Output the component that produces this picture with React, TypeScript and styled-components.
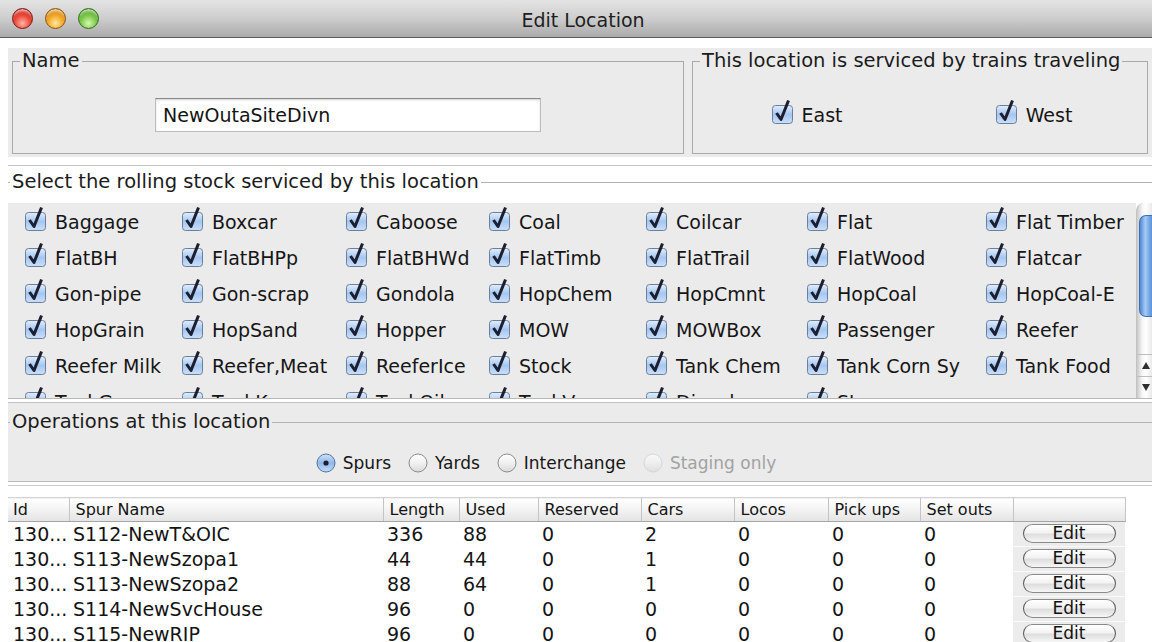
import React from "react";
import styled, { createGlobalStyle } from "styled-components";

const GlobalStyle = createGlobalStyle`
  html, body {
    margin: 0;
    padding: 0;
    background: #ffffff;
  }
  body {
    font-family: "DejaVu Sans", "Liberation Sans", sans-serif;
    color: #161616;
  }
`;

const Window = styled.div`
  width: 1152px;
  height: 642px;
  overflow: hidden;
  background: #ffffff;
`;

const TitleBar = styled.div`
  height: 37px;
  border-bottom: 1px solid #5c5c5c;
  background: linear-gradient(#e4e4e4, #cdcdcd 50%, #aaaaaa);
  display: grid;
  grid-template-columns: 1fr auto 1fr;
  align-items: center;
`;

const Lights = styled.div`
  display: flex;
  gap: 12px;
  padding-left: 12px;
`;

const tones: Record<string, [string, string, string, string]> = {
  red: ["#ffb4a8", "#ec4a3a", "#a9150e", "#7e1510"],
  amber: ["#ffe6a0", "#f3a828", "#b86a08", "#8d5308"],
  green: ["#d8f8b0", "#7dc94c", "#3a8a1c", "#2f6e18"],
};

const Light = styled.span<{ $tone: string }>`
  width: 21px;
  height: 21px;
  border-radius: 50%;
  box-sizing: border-box;
  border: 1px solid ${(p) => tones[p.$tone][3]};
  background: radial-gradient(
    circle at 50% 75%,
    ${(p) => tones[p.$tone][0]} 0%,
    ${(p) => tones[p.$tone][1]} 45%,
    ${(p) => tones[p.$tone][2]} 100%
  );
  box-shadow: inset 0 4px 3px -2px rgba(255, 255, 255, 0.75);
`;

const Title = styled.div`
  font-size: 19px;
  padding-left: 14px;
  color: #1e1e1e;
  padding-top: 2px;
`;

const TopRow = styled.div`
  display: grid;
  grid-template-columns: 680px 464px;
  height: 109px;
  margin: 10px 0 0 8px;
`;

const Panel = styled.div`
  background: #ebebeb;
  padding: 2px 4px 3px;
  box-sizing: border-box;
  display: flex;
`;

const Group = styled.fieldset`
  flex: 1;
  margin: 0;
  padding: 0;
  min-width: 0;
  border: 1px solid #a9a9a9;
`;

const OpenGroup = styled.fieldset`
  margin: 0;
  padding: 0;
  min-width: 0;
  border: none;
  border-top: 1px solid #b2b2b2;
`;

const Caption = styled.legend<{ $indent?: number }>`
  margin-left: ${(p) => p.$indent ?? 7}px;
  padding: 0 2px;
  font-size: 19.5px;
  line-height: 22px;
  color: #1b1b1b;
`;

const NameBody = styled.div`
  display: flex;
  justify-content: center;
  padding-top: 26px;
`;

const TextField = styled.div`
  width: 386px;
  height: 34px;
  box-sizing: border-box;
  background: #ffffff;
  border: 1px solid #bcbcbc;
  border-top-color: #8a8a8a;
  box-shadow: inset 0 1px 2px rgba(0, 0, 0, 0.18);
  padding-left: 7px;
  font-size: 19px;
  line-height: 32px;
  color: #141414;
`;

const TrainsBody = styled.div`
  display: grid;
  grid-template-columns: 1fr 1fr;
  justify-items: center;
  padding-top: 32px;
`;

const CheckItem = styled.label`
  display: inline-flex;
  align-items: center;
  gap: 8px;
  font-size: 19px;
  line-height: 22px;
  white-space: nowrap;
  color: #161616;

  & svg {
    margin-top: -6px;
    flex-shrink: 0;
  }
`;

const Separator = styled.div`
  margin: 8px 0 0 8px;
  height: 1px;
  border-top: 1px solid #c6c6c6;
`;

const StockGroup = styled(OpenGroup)`
  margin: 4px 0 0 8px;
`;

const ScrollPane = styled.div`
  margin-top: 10px;
  height: 195px;
  display: flex;
  border-bottom: 1px solid #b8b8b8;
`;

const StockGrid = styled.div`
  flex: 1;
  background: #ebebeb;
  overflow: hidden;
  display: grid;
  grid-template-columns: 157px 164px 143px 157px 161px 179px 1fr;
  grid-auto-rows: 36px;
  align-items: center;
  padding: 1px 0 0 16px;
`;

const ScrollBar = styled.div`
  width: 15px;
  flex-shrink: 0;
  display: flex;
  flex-direction: column;
  background: linear-gradient(to right, #c9c9c9, #f6f6f6 35%, #ffffff 60%, #e9e9e9);
  border-left: 1px solid #c2c2c2;
  border-top-left-radius: 8px;
`;

const Thumb = styled.div`
  margin: 12px 0 0 2px;
  height: 100px;
  border-radius: 7px 0 0 7px;
  border: 1px solid #3f6fb6;
  border-right: none;
  background: linear-gradient(to right, #4d89d6, #a7cbf4 45%, #76a9e6 75%, #5b93db);
`;

const Track = styled.div`
  flex: 1;
`;

const Arrow = styled.div<{ $down?: boolean }>`
  height: 21px;
  border-top: 1px solid #bdbdbd;
  display: flex;
  align-items: center;
  justify-content: center;
  padding-left: 3px;

  &::before {
    content: "";
    border-left: 4px solid transparent;
    border-right: 4px solid transparent;
    ${(p) =>
      p.$down ? "border-top: 7px solid #2e2e2e;" : "border-bottom: 7px solid #2e2e2e;"}
  }
`;

const OpsPanel = styled.div`
  margin: 3px 0 0 8px;
  background: #ebebeb;
  border-top: 1px solid #c2c2c2;
  border-bottom: 1px solid #bdbdbd;
  padding: 8px 0 7px;
`;

const RadioRow = styled.div`
  display: flex;
  justify-content: center;
  gap: 17px;
  margin-top: 19px;
  padding-right: 68px;
`;

const RadioItem = styled.label<{ $disabled?: boolean }>`
  display: inline-flex;
  align-items: center;
  gap: 7px;
  font-size: 17px;
  line-height: 22px;
  color: ${(p) => (p.$disabled ? "#a2a2a2" : "#161616")};
`;

const TableWrap = styled.div`
  margin: 3px 0 0 8px;
  border-top: 1px solid #cbcbcb;
  padding-top: 11px;
`;

const Table = styled.table`
  width: 1117px;
  table-layout: fixed;
  border-collapse: collapse;
`;

const HeadCell = styled.th`
  height: 23px;
  padding: 0 0 0 6px;
  text-align: left;
  font-weight: normal;
  font-size: 16px;
  color: #141414;
  white-space: nowrap;
  overflow: hidden;
  background: linear-gradient(#ffffff, #f4f4f4 45%, #e3e3e3);
  border-top: 1px solid #d4d4d4;
  border-bottom: 1px solid #a6a6a6;
  border-left: 1px solid #c4c4c4;

  &:first-child {
    border-left: none;
    padding-left: 5px;
  }
  &:last-child {
    border-right: 1px solid #c4c4c4;
  }
`;

const Cell = styled.td`
  height: 25px;
  padding: 0 0 0 4px;
  font-size: 19px;
  line-height: 25px;
  white-space: nowrap;
  overflow: hidden;
  color: #141414;

  &:first-child {
    padding-left: 5px;
  }
`;

const ButtonCell = styled.td`
  height: 25px;
  padding: 0;
  background: #ececec;
  box-shadow: inset 0 -1px 0 #fafafa;
  vertical-align: top;
`;

const EditButton = styled.button`
  display: block;
  width: 93px;
  height: 19px;
  margin: 2px auto 0;
  padding: 0;
  border: 1px solid #8a8a8a;
  border-left-color: #555;
  border-right-color: #555;
  border-radius: 10px;
  background: linear-gradient(#ffffff, #f3f3f3 45%, #dedede 55%, #f6f6f6);
  font-family: "DejaVu Sans", sans-serif;
  font-size: 17px;
  line-height: 17px;
  color: #111;
`;

const CheckBox = () => (
  <svg width="23" height="26" viewBox="0 0 23 26">
    <defs>
      <linearGradient id="boxFill" x1="0" y1="0" x2="0" y2="1">
        <stop offset="0" stopColor="#e3eefc" />
        <stop offset="0.5" stopColor="#a5c6f0" />
        <stop offset="1" stopColor="#cbe0fa" />
      </linearGradient>
    </defs>
    <rect x="1.5" y="6.5" width="20" height="18" rx="3" fill="url(#boxFill)" stroke="#6a7f9b" />
    <path
      d="M5.5 14 L10 20.5 L17.5 1.5"
      fill="none"
      stroke="#1c1f30"
      strokeWidth="3"
      strokeLinejoin="round"
    />
  </svg>
);

const RadioDot = ({ on, disabled }: { on?: boolean; disabled?: boolean }) => (
  <svg width="20" height="20" viewBox="0 0 20 20">
    <defs>
      <linearGradient id="radioOn" x1="0" y1="0" x2="0" y2="1">
        <stop offset="0" stopColor="#cfe2fb" />
        <stop offset="0.5" stopColor="#8fb7ec" />
        <stop offset="1" stopColor="#c6dcf9" />
      </linearGradient>
      <linearGradient id="radioOff" x1="0" y1="0" x2="0" y2="1">
        <stop offset="0" stopColor="#ffffff" />
        <stop offset="0.5" stopColor="#f0f0f0" />
        <stop offset="1" stopColor="#d9d9d9" />
      </linearGradient>
    </defs>
    <circle
      cx="10"
      cy="10"
      r="9"
      fill={on ? "url(#radioOn)" : "url(#radioOff)"}
      stroke={disabled ? "#cfcfcf" : on ? "#5a7394" : "#8c8c8c"}
      opacity={disabled ? 0.7 : 1}
    />
    {on && <circle cx="10" cy="10" r="2.6" fill="#1b1e2c" />}
  </svg>
);

const stock = [
  ["Baggage", "Boxcar", "Caboose", "Coal", "Coilcar", "Flat", "Flat Timber"],
  ["FlatBH", "FlatBHPp", "FlatBHWd", "FlatTimb", "FlatTrail", "FlatWood", "Flatcar"],
  ["Gon-pipe", "Gon-scrap", "Gondola", "HopChem", "HopCmnt", "HopCoal", "HopCoal-E"],
  ["HopGrain", "HopSand", "Hopper", "MOW", "MOWBox", "Passenger", "Reefer"],
  ["Reefer Milk", "Reefer,Meat", "ReeferIce", "Stock", "Tank Chem", "Tank Corn Sy", "Tank Food"],
  ["TankGas", "TankKero", "TankOil", "TankVeg", "Diesel", "Steam"],
].flat();

const columns = [
  { title: "Id", width: 61 },
  { title: "Spur Name", width: 314 },
  { title: "Length", width: 76 },
  { title: "Used", width: 79 },
  { title: "Reserved", width: 103 },
  { title: "Cars", width: 93 },
  { title: "Locos", width: 94 },
  { title: "Pick ups", width: 92 },
  { title: "Set outs", width: 93 },
  { title: "", width: 112 },
];

const spurs = [
  ["130...", "S112-NewT&OIC", "336", "88", "0", "2", "0", "0", "0"],
  ["130...", "S113-NewSzopa1", "44", "44", "0", "1", "0", "0", "0"],
  ["130...", "S113-NewSzopa2", "88", "64", "0", "1", "0", "0", "0"],
  ["130...", "S114-NewSvcHouse", "96", "0", "0", "0", "0", "0", "0"],
  ["130...", "S115-NewRIP", "96", "0", "0", "0", "0", "0", "0"],
];

const operations = [
  { label: "Spurs", on: true },
  { label: "Yards" },
  { label: "Interchange" },
  { label: "Staging only", disabled: true },
];

const App = (): JSX.Element => {
  return (
    <>
      <GlobalStyle />
      <Window>
        <TitleBar>
          <Lights>
            <Light $tone="red" />
            <Light $tone="amber" />
            <Light $tone="green" />
          </Lights>
          <Title>Edit Location</Title>
          <div />
        </TitleBar>

        <TopRow>
          <Panel>
            <Group>
              <Caption>Name</Caption>
              <NameBody>
                <TextField>NewOutaSiteDivn</TextField>
              </NameBody>
            </Group>
          </Panel>
          <Panel>
            <Group>
              <Caption>This location is serviced by trains traveling</Caption>
              <TrainsBody>
                <CheckItem>
                  <CheckBox />
                  East
                </CheckItem>
                <CheckItem>
                  <CheckBox />
                  West
                </CheckItem>
              </TrainsBody>
            </Group>
          </Panel>
        </TopRow>

        <Separator />

        <StockGroup>
          <Caption $indent={2}>Select the rolling stock serviced by this location</Caption>
          <ScrollPane>
            <StockGrid>
              {stock.map((type) => (
                <CheckItem key={type}>
                  <CheckBox />
                  {type}
                </CheckItem>
              ))}
            </StockGrid>
            <ScrollBar>
              <Thumb />
              <Track />
              <Arrow />
              <Arrow $down />
            </ScrollBar>
          </ScrollPane>
        </StockGroup>

        <OpsPanel>
          <OpenGroup>
            <Caption $indent={2}>Operations at this location</Caption>
            <RadioRow>
              {operations.map((op) => (
                <RadioItem key={op.label} $disabled={op.disabled}>
                  <RadioDot on={op.on} disabled={op.disabled} />
                  {op.label}
                </RadioItem>
              ))}
            </RadioRow>
          </OpenGroup>
        </OpsPanel>

        <TableWrap>
          <Table>
            <colgroup>
              {columns.map((c, i) => (
                <col key={i} style={{ width: c.width }} />
              ))}
            </colgroup>
            <thead>
              <tr>
                {columns.map((c, i) => (
                  <HeadCell key={i}>{c.title}</HeadCell>
                ))}
              </tr>
            </thead>
            <tbody>
              {spurs.map((row) => (
                <tr key={row[1]}>
                  {row.map((value, i) => (
                    <Cell key={i}>{value}</Cell>
                  ))}
                  <ButtonCell>
                    <EditButton>Edit</EditButton>
                  </ButtonCell>
                </tr>
              ))}
            </tbody>
          </Table>
        </TableWrap>
      </Window>
    </>
  );
};

export default App;
